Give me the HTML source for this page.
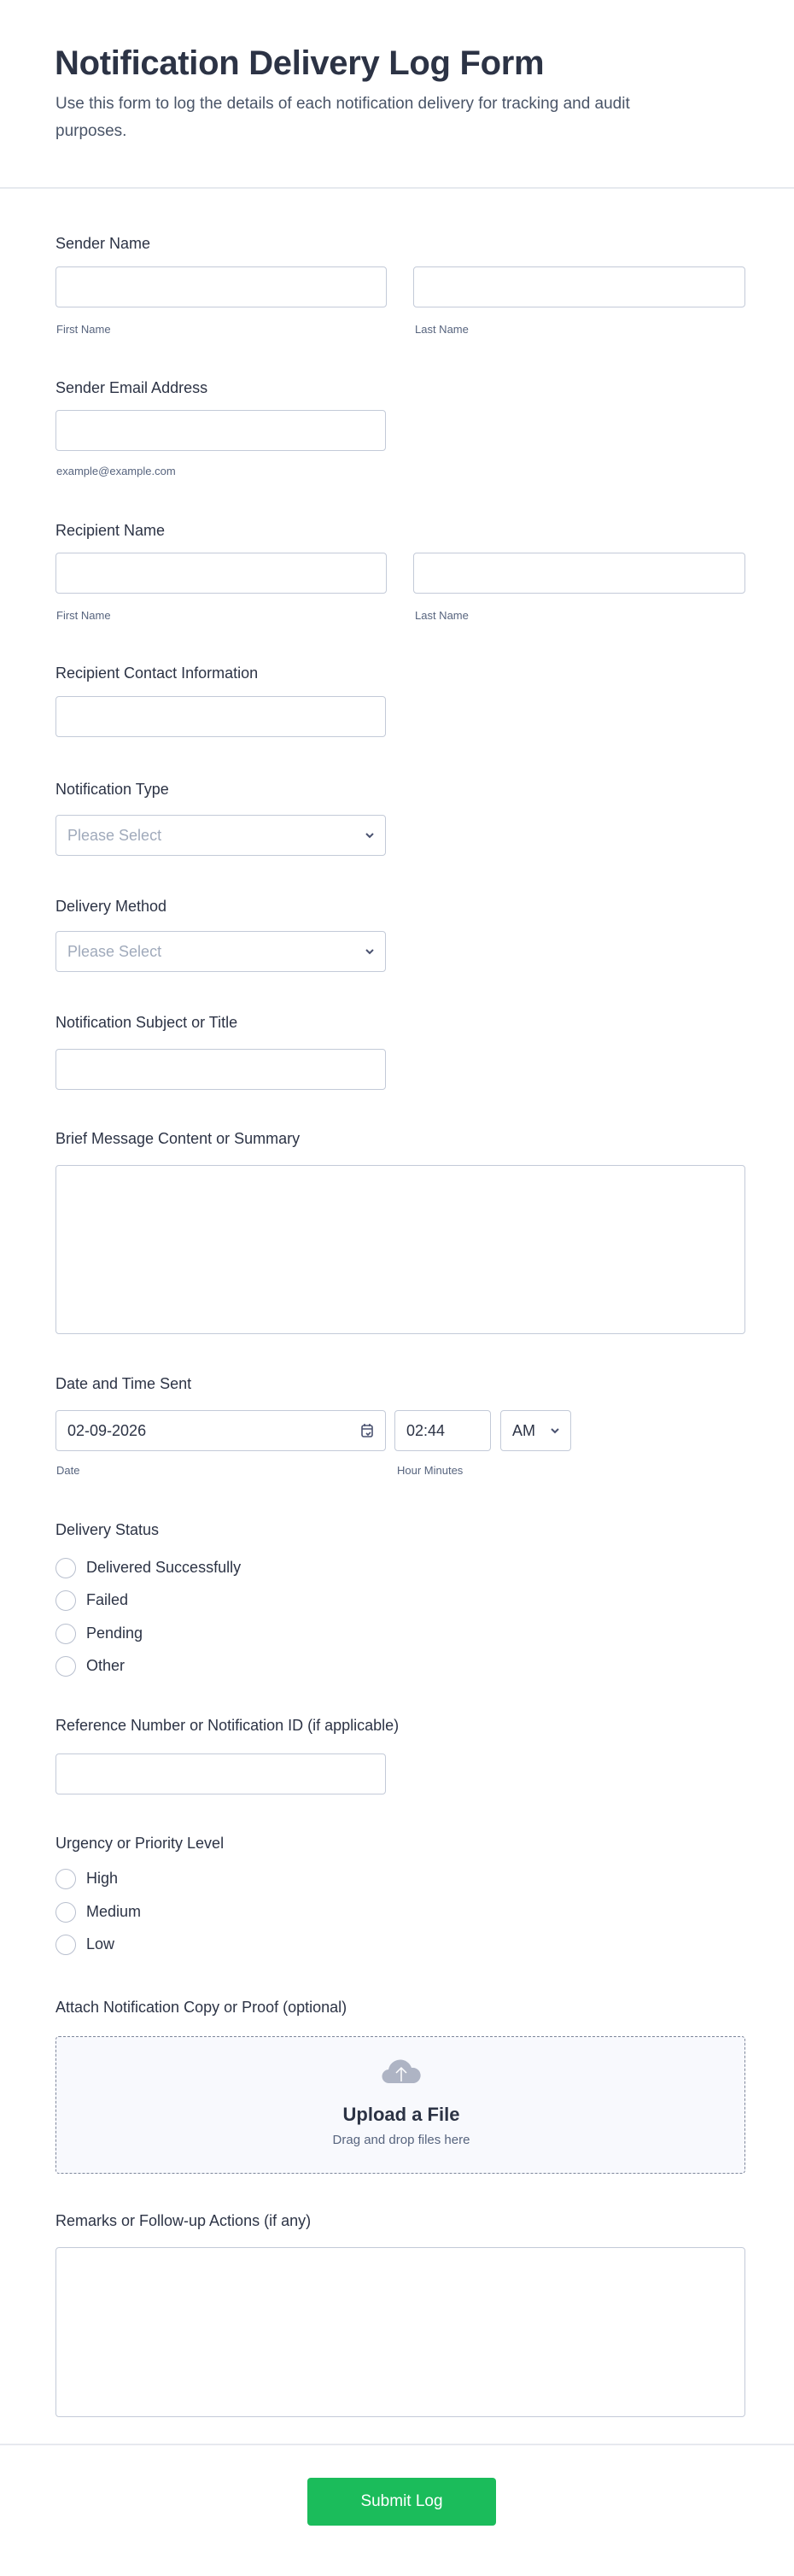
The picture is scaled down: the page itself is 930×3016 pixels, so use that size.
<!DOCTYPE html>
<html><head><meta charset="utf-8"><style>
*{box-sizing:border-box;margin:0;padding:0}
body{width:930px;height:3009px;background:#fff;font-family:"Liberation Sans",Arial,sans-serif;color:#2c3345;position:relative;overflow:hidden}
.a{position:absolute}
h1{position:absolute;left:64px;top:52px;font-size:40px;font-weight:700;color:#2c3345;letter-spacing:-0.3px}
.sub{position:absolute;left:65px;top:106px;width:740px;font-size:19px;line-height:32px;color:#4a5568}
.hr{position:absolute;left:0;width:930px;height:2px;background:#e6e9ef}
.lab{position:absolute;left:65px;font-size:18px;color:#2c3345;line-height:22px}
.in{position:absolute;height:48px;border:1px solid #c3cad8;border-radius:4px;background:#fff}
.sl{position:absolute;font-size:13px;color:#57647e}
.ph{position:absolute;left:13px;top:13px;font-size:18px;color:#a0aabb}
.val{position:absolute;left:13px;top:13px;font-size:18px;color:#2c3345}
.rad{position:absolute;left:65px;width:24px;height:24px;border:1px solid #b8bfce;border-radius:50%}
.rt{position:absolute;left:101px;font-size:18px;color:#2c3345}
.chev{position:absolute;right:12px;top:18px}
.s1{position:absolute;left:0;top:5px;width:930px;height:3009px}
.s2{position:absolute;left:0;top:2px;width:930px;height:3009px}
</style></head><body>
<h1>Notification Delivery Log Form</h1>
<div class="sub">Use this form to log the details of each notification delivery for tracking and audit purposes.</div>
<div class="hr" style="top:219px"></div>

<div class="lab" style="top:274px">Sender Name</div>
<div class="in" style="left:65px;top:312px;width:388px"></div>
<div class="in" style="left:484px;top:312px;width:389px"></div>
<div class="sl" style="left:66px;top:378px">First Name</div>
<div class="sl" style="left:486px;top:378px">Last Name</div>

<div class="lab" style="top:443px">Sender Email Address</div>
<div class="in" style="left:65px;top:480px;width:387px"></div>
<div class="sl" style="left:66px;top:544px">example@example.com</div>

<div class="lab" style="top:610px">Recipient Name</div>
<div class="in" style="left:65px;top:647px;width:388px"></div>
<div class="in" style="left:484px;top:647px;width:389px"></div>
<div class="sl" style="left:66px;top:713px">First Name</div>
<div class="sl" style="left:486px;top:713px">Last Name</div>

<div class="lab" style="top:777px">Recipient Contact Information</div>
<div class="in" style="left:65px;top:815px;width:387px"></div>

<div class="lab" style="top:913px">Notification Type</div>
<div class="in" style="left:65px;top:954px;width:387px"><div class="ph">Please Select</div>
<svg class="chev" width="12" height="10" viewBox="0 0 12 10"><path d="M2 3l4 4 4-4" stroke="#4a5270" stroke-width="2" fill="none"/></svg></div>

<div class="lab" style="top:1050px">Delivery Method</div>
<div class="in" style="left:65px;top:1090px;width:387px"><div class="ph">Please Select</div>
<svg class="chev" width="12" height="10" viewBox="0 0 12 10"><path d="M2 3l4 4 4-4" stroke="#4a5270" stroke-width="2" fill="none"/></svg></div>

<div class="s1">
<div class="lab" style="top:1181px">Notification Subject or Title</div>
<div class="in" style="left:65px;top:1223px;width:387px"></div>

<div class="lab" style="top:1317px">Brief Message Content or Summary</div>
<div class="in" style="left:65px;top:1359px;width:808px;height:198px"></div>

<div class="lab" style="top:1604px">Date and Time Sent</div>
<div class="in" style="left:65px;top:1646px;width:387px"><div class="val">02-09-2026</div>
<svg class="a" style="right:12px;top:13px" width="18" height="20" viewBox="0 0 18 20"><rect x="3" y="4" width="12" height="13" rx="2" stroke="#4a5270" stroke-width="1.6" fill="none"/><path d="M3 8h12M6 2v3M12 2v3M8 13l2 2 3-3" stroke="#4a5270" stroke-width="1.6" fill="none"/></svg></div>
<div class="in" style="left:462px;top:1646px;width:113px"><div class="val">02:44</div></div>
<div class="in" style="left:586px;top:1646px;width:83px"><div class="val">AM</div>
<svg class="chev" width="12" height="10" viewBox="0 0 12 10"><path d="M2 3l4 4 4-4" stroke="#4a5270" stroke-width="2" fill="none"/></svg></div>
<div class="sl" style="left:66px;top:1709px">Date</div>
<div class="sl" style="left:465px;top:1709px">Hour Minutes</div>

<div class="s2">
<div class="lab" style="top:1773px">Delivery Status</div>
<div class="rad" style="top:1817px"></div><div class="rt" style="top:1818px">Delivered Successfully</div>
<div class="rad" style="top:1855px"></div><div class="rt" style="top:1856px">Failed</div>
<div class="rad" style="top:1894px"></div><div class="rt" style="top:1895px">Pending</div>
<div class="rad" style="top:1932px"></div><div class="rt" style="top:1933px">Other</div>

<div class="lab" style="top:2002px">Reference Number or Notification ID (if applicable)</div>
<div class="in" style="left:65px;top:2046px;width:387px"></div>

<div class="lab" style="top:2140px">Urgency or Priority Level</div>
<div class="rad" style="top:2181px"></div><div class="rt" style="top:2182px">High</div>
<div class="rad" style="top:2220px"></div><div class="rt" style="top:2221px">Medium</div>
<div class="rad" style="top:2258px"></div><div class="rt" style="top:2259px">Low</div>

<div class="lab" style="top:2332px">Attach Notification Copy or Proof (optional)</div>
<div class="a" style="left:65px;top:2377px;width:808px;height:161px;border:1.5px dashed #7d869b;border-radius:4px;background:#f8f9fd"></div>
<svg class="a" style="left:446px;top:2404px" width="48" height="30" viewBox="0 0 48 30"><path d="M10 28a8 8 0 0 1-1-16 14 14 0 0 1 27-2 9 9 0 0 1 3 18z" fill="#aeb4c4"/><path d="M24 26V11M18 16l6-6 6 6" stroke="#fff" stroke-width="1.5" fill="none"/></svg>
<div class="a" style="left:0;width:940px;text-align:center;top:2456px;font-size:22px;font-weight:700;color:#2c3345">Upload a File</div>
<div class="a" style="left:0;width:940px;text-align:center;top:2490px;font-size:15px;color:#57647e">Drag and drop files here</div>

<div class="lab" style="top:2582px">Remarks or Follow-up Actions (if any)</div>
<div class="in" style="left:65px;top:2624px;width:808px;height:199px"></div>

<div class="hr" style="top:2854px"></div>
<div class="a" style="left:360px;top:2894px;width:221px;height:56px;background:#1bbc5b;border-radius:4px;color:#fff;font-size:19px;text-align:center;line-height:56px">Submit Log</div>
</div>
</div>
</body></html>
